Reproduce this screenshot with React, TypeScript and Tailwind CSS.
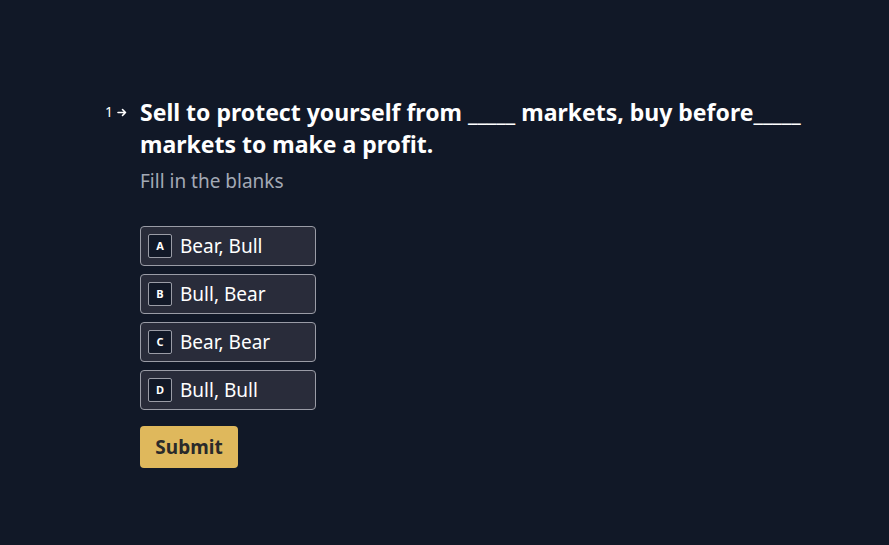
import { useState } from "react";

const OPTIONS = [
  { key: "A", label: "Bear, Bull" },
  { key: "B", label: "Bull, Bear" },
  { key: "C", label: "Bear, Bear" },
  { key: "D", label: "Bull, Bull" },
];

export default function App() {
  const [picked, setPicked] = useState<string | null>(null);

  return (
    <div
      className="min-h-screen bg-[#111827] text-white"
      style={{ fontFamily: "'Noto Sans', 'Open Sans', sans-serif" }}
    >
      <div className="flex pt-[96px] pl-[105px]">
        <div className="flex h-[32px] w-[35px] items-center gap-[4px] text-[14px] leading-none text-white">
          <span>1</span>
          <svg width="10" height="9" viewBox="0 0 10 9" fill="none" stroke="white" strokeWidth="1.6" strokeLinecap="round" strokeLinejoin="round">
            <path d="M1 4.5h7.5M5.5 1.5l3 3-3 3" />
          </svg>
        </div>
        <div className="flex flex-col">
          <h1 className="w-[680px] text-[23px] font-bold leading-[32px]">
            Sell to protect yourself from _____ markets, buy before_____ markets to make a profit.
          </h1>
          <p className="mt-[9px] text-[19px] leading-[24px] text-[#a3a9b5]">Fill in the blanks</p>

          <div className="mt-[33px] flex flex-col gap-[8px]">
            {OPTIONS.map((o) => (
              <button
                key={o.key}
                onClick={() => setPicked(o.key)}
                className={`flex h-[40px] w-[176px] items-center gap-[8px] rounded-[4px] border px-[7px] text-left ${
                  picked === o.key ? "border-[#e0b95a] bg-[#343848]" : "border-[#9a9ca6] bg-[#292c3a]"
                }`}
              >
                <span className="flex h-[24px] w-[24px] items-center justify-center rounded-[2px] border border-[#9a9ca6] bg-[#111827] text-[11px] font-bold">
                  {o.key}
                </span>
                <span className="text-[19px]">{o.label}</span>
              </button>
            ))}
          </div>

          <button className="mt-[16px] h-[42px] w-[98px] rounded-[4px] bg-[#dfb85c] text-[19px] font-bold text-[#2a2a2a]">
            Submit
          </button>
        </div>
      </div>
    </div>
  );
}
